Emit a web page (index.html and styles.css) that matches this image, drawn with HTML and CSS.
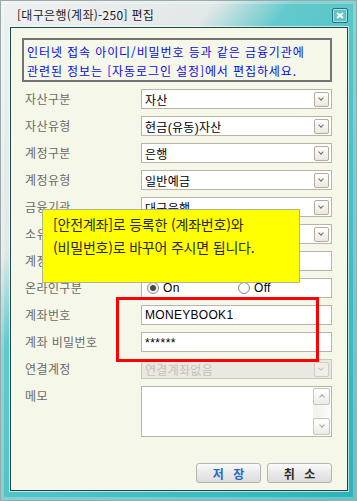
FILE: index.html
```html
<!DOCTYPE html>
<html lang="ko">
<head>
    <meta charset="UTF-8">
    <title>[대구은행(계좌)-250] 편집</title>
    <link rel="stylesheet" href="styles.css">
</head>
<body>
    <div class="window">
        <div class="titlebar">
            <span class="title">[대구은행(계좌)-250] 편집</span>
            <span class="close">
                <svg width="8" height="7" viewBox="0 0 8 7">
                    <path d="M1,1 L7,6 M7,1 L1,6" stroke="#fff" stroke-width="2"/>
                </svg>
            </span>
        </div>
        <div class="panel">
            <div class="notice">
                인터넷 접속 아이디/비밀번호 등과 같은 금융기관에<br>
                관련된 정보는 [자동로그인 설정]에서 편집하세요.
            </div>

            <div class="form">
                <label>자산구분</label>
                <div class="field select"><span>자산</span><i class="drop"></i></div>

                <label>자산유형</label>
                <div class="field select"><span>현금(유동)자산</span><i class="drop"></i></div>

                <label>계정구분</label>
                <div class="field select"><span>은행</span><i class="drop"></i></div>

                <label>계정유형</label>
                <div class="field select"><span>일반예금</span><i class="drop"></i></div>

                <label>금융기관</label>
                <div class="field select"><span>대구은행</span><i class="drop"></i></div>

                <label>소유자</label>
                <div class="field select"><span></span><i class="drop"></i></div>

                <label>계정명</label>
                <div class="field"><span></span></div>

                <label>온라인구분</label>
                <div class="field radios">
                    <span class="radio checked">On</span>
                    <span class="radio">Off</span>
                </div>

                <label>계좌번호</label>
                <div class="field"><span>MONEYBOOK1</span></div>

                <label>계좌 비밀번호</label>
                <div class="field"><span class="stars">******</span></div>

                <label>연결계정</label>
                <div class="field select disabled"><span>연결계좌없음</span><i class="drop"></i></div>

                <label class="top">메모</label>
                <div class="field memo">
                    <div class="scroll">
                        <i class="btn up"></i>
                        <i class="btn down"></i>
                    </div>
                </div>
            </div>

            <div class="actions">
                <button class="save">저 장</button>
                <button class="cancel">취 소</button>
            </div>

            <div class="tip">
                [안전계좌]로 등록한 (계좌번호)와<br>
                (비밀번호)로 바꾸어 주시면 됩니다.
            </div>
            <div class="highlight"></div>
        </div>
    </div>
</body>
</html>
```

FILE: styles.css
```css
html, body {
    margin: 0;
    padding: 0;
}

body {
    font-family: "Noto Sans CJK KR", "Liberation Sans", sans-serif;
    font-size: 12px;
    color: #111;
}

.window {
    width: 357px;
    height: 501px;
    box-sizing: border-box;
    padding: 0 9px 10px 10px;
    display: flex;
    flex-direction: column;
    background: linear-gradient(130deg, #eef1f2 0%, #e2e7e8 28%, #62c9cc 38%, #45bfc2 70%, #2fb3b6 100%);
    box-shadow: inset 0 0 0 1px #9aaaaa, inset 0 0 0 4px rgba(255, 255, 255, 0.25);
}

.titlebar {
    height: 27px;
    display: flex;
    align-items: center;
    justify-content: space-between;
    padding: 0 0 0 7px;
}

    .titlebar .title {
        color: #1b1b1b;
        font-size: 12px;
        letter-spacing: 0.3px;
        text-shadow: 0 0 6px rgba(255, 255, 255, 0.9);
        margin-top: 2px;
    }

    .titlebar .close {
        width: 14px;
        height: 13px;
        margin-top: 4px;
        display: flex;
        align-items: center;
        justify-content: center;
        border: 1px solid #2d6f72;
        border-radius: 2px;
        background: #5fc4c6;
        box-shadow: inset 0 0 0 1px #a9e3e4;
    }

.panel {
    position: relative;
    flex: 1;
    background: #f5f7e8;
    border: 1px solid #1d4849;
    box-shadow: 0 0 0 1px rgba(255, 255, 255, 0.6);
    display: flex;
    flex-direction: column;
}

.notice {
    margin: 10px 0 0 11px;
    width: 310px;
    height: 44px;
    box-sizing: border-box;
    border: 2px solid #737373;
    padding: 2px 0 0 3px;
    color: #0a0ae6;
    line-height: 19px;
    letter-spacing: 0.9px;
    white-space: nowrap;
}

.form {
    margin-top: 7px;
    padding: 0 15px 0 14px;
    display: grid;
    grid-template-columns: 116px 191px;
    grid-auto-rows: 20px;
    row-gap: 7px;
}

    .form label {
        color: #6a6a6a;
        align-self: center;
        line-height: 20px;
        letter-spacing: 0.4px;
    }

        .form label.top {
            align-self: start;
        }

.field {
    box-sizing: border-box;
    height: 20px;
    border: 1px solid #bcb2a8;
    background: #fff;
    display: flex;
    align-items: center;
    padding: 0 2px 0 3px;
    color: #000;
    font-family: "Liberation Sans", "Noto Sans CJK KR", sans-serif;
    font-size: 12px;
    letter-spacing: 0.3px;
}

    .field span {
        flex: 1;
    }

    .field .stars {
        letter-spacing: 0.5px;
        margin-top: 2px;
    }

    .field.disabled {
        background: #ebe8e2;
        border-color: #cbc5bd;
        color: #c4c0bb;
    }

.drop {
    width: 13px;
    height: 13px;
    border: 1px solid #b6aa9c;
    border-radius: 2px;
    background: linear-gradient(#ffffff, #ece7df);
    position: relative;
}

    .drop::after {
        content: "";
        position: absolute;
        left: 4px;
        top: 3px;
        width: 3px;
        height: 3px;
        border-right: 1px solid #6d6d6d;
        border-bottom: 1px solid #6d6d6d;
        transform: rotate(45deg);
    }

.disabled .drop {
    border-color: #d3ccc4;
    background: #f1eee9;
}

    .disabled .drop::after {
        border-color: #c2c2c2;
    }

.radios {
    padding-left: 5px;
}

.radio {
    flex: 0 0 auto;
    display: flex;
    align-items: center;
    gap: 4px;
    font-family: "Liberation Sans", sans-serif;
}

    .radio:first-child {
        width: 90px;
    }

    .radio::before {
        content: "";
        width: 10px;
        height: 10px;
        border: 1px solid #8a8a8a;
        border-radius: 50%;
        background: radial-gradient(circle, #fff 40%, #e4e4e4 100%);
    }

    .radio.checked::before {
        background: radial-gradient(circle, #4a4a4a 0 2.5px, #ececec 3.5px, #fff 100%);
    }

.field.memo {
    height: 51px;
    align-items: stretch;
    justify-content: flex-end;
    padding: 1px 1px 1px 0;
}

.scroll {
    width: 17px;
    display: flex;
    flex-direction: column;
    justify-content: space-between;
    background: linear-gradient(90deg, #f1f1ee, #fbfbf9);
}

    .scroll .btn {
        height: 15px;
        border: 1px solid #c8c3bd;
        border-radius: 2px;
        background: linear-gradient(#ffffff, #eeebe6);
        position: relative;
    }

        .scroll .btn::after {
            content: "";
            position: absolute;
            left: 6px;
            width: 3px;
            height: 3px;
            border-left: 1px solid #a4a4a4;
            border-top: 1px solid #a4a4a4;
        }

        .scroll .up::after {
            top: 6px;
            transform: rotate(45deg);
        }

        .scroll .down::after {
            top: 4px;
            transform: rotate(225deg);
        }

.actions {
    margin-top: 57px;
    padding-right: 15px;
    display: flex;
    justify-content: flex-end;
    gap: 6px;
}

    .actions button {
        width: 65px;
        height: 20px;
        border: 1px solid #b4b4b4;
        border-radius: 3px;
        background: linear-gradient(#fbfbfb, #e9e9e9 50%, #dcdcdc);
        font-family: "Noto Sans CJK KR", sans-serif;
        font-size: 12px;
        font-weight: 700;
        letter-spacing: 3px;
        padding: 0 0 0 3px;
    }

    .actions .save {
        color: #2a68c6;
    }

    .actions .cancel {
        color: #2b2b2b;
    }

.tip {
    position: absolute;
    left: 31px;
    top: 181px;
    width: 258px;
    height: 74px;
    box-sizing: border-box;
    background: #ffff00;
    border: 1px solid #b4b48a;
    padding: 3px 0 0 10px;
    font-size: 14px;
    line-height: 23px;
    letter-spacing: -0.2px;
    color: #2b2b14;
}

.highlight {
    position: absolute;
    left: 105px;
    top: 269px;
    width: 203px;
    height: 65px;
    box-sizing: border-box;
    border: 3px solid #ff0000;
}
```
